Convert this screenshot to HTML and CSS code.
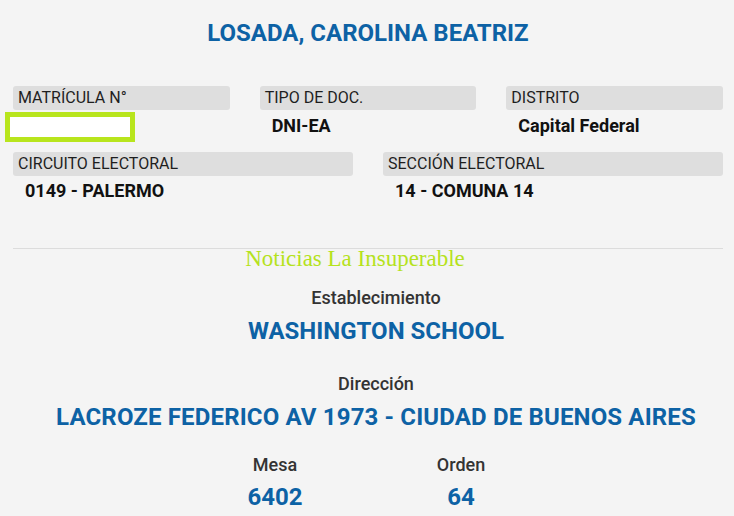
FILE: index.html
```html
<!DOCTYPE html>
<html lang="es">
<head>
<meta charset="utf-8">
<link rel="stylesheet" href="styles.css">
</head>
<body>
<div class="page">
  <h1 class="name">LOSADA, CAROLINA BEATRIZ</h1>

  <div class="grid three">
    <div class="field">
      <div class="label">MATRÍCULA N°</div>
      <div class="redact"></div>
    </div>
    <div class="field">
      <div class="label">TIPO DE DOC.</div>
      <div class="value v1">DNI-EA</div>
    </div>
    <div class="field">
      <div class="label">DISTRITO</div>
      <div class="value v1">Capital Federal</div>
    </div>
  </div>

  <div class="grid two">
    <div class="field">
      <div class="label">CIRCUITO ELECTORAL</div>
      <div class="value v2">0149 - PALERMO</div>
    </div>
    <div class="field">
      <div class="label">SECCIÓN ELECTORAL</div>
      <div class="value v2">14 - COMUNA 14</div>
    </div>
  </div>

  <hr class="sep">
  <div class="brand">Noticias La Insuperable</div>

  <div class="place">
    <div class="cap first">Establecimiento</div>
    <div class="big">WASHINGTON SCHOOL</div>
    <div class="cap second">Dirección</div>
    <div class="big wide">LACROZE FEDERICO AV 1973 - CIUDAD DE BUENOS AIRES</div>
  </div>

  <div class="pair">
    <div class="cell">
      <div class="cap">Mesa</div>
      <div class="big">6402</div>
    </div>
    <div class="cell">
      <div class="cap">Orden</div>
      <div class="big">64</div>
    </div>
  </div>
</div>
</body>
</html>
```

FILE: styles.css
```css
html, body {
  margin: 0;
  padding: 0;
  background: #f4f4f4;
}
body {
  font-family: Roboto, "Liberation Sans", sans-serif;
  color: #222;
}
.page {
  width: 710px;
  margin-left: 13px;
}
.name {
  margin: 19px 0 0;
  text-align: center;
  font-size: 24px;
  line-height: 28px;
  font-weight: 700;
  color: #0d62a5;
}
.grid {
  display: grid;
  column-gap: 30px;
}
.three {
  grid-template-columns: repeat(3, 1fr);
  margin-top: 39px;
}
.two {
  grid-template-columns: repeat(2, 1fr);
  margin-top: 10px;
}
.label {
  background: #dedede;
  border-radius: 3px;
  height: 24px;
  line-height: 24px;
  font-size: 16px;
  padding-left: 5px;
  color: #1e1e1e;
}
.redact {
  margin: 2px 0 0 -8px;
  width: 130px;
  height: 30px;
  box-sizing: border-box;
  border: 5px solid #b8e51d;
  background: #fff;
}
.value {
  padding-left: 12px;
  font-size: 18px;
  font-weight: 700;
  color: #111;
}
.v1 {
  margin-top: 1px;
  line-height: 29px;
}
.v2 {
  margin-top: 2px;
  line-height: 26px;
}
.sep {
  margin: 44px 0 0;
  border: 0;
  border-top: 1px solid #dcdcdc;
  height: 0;
}
.brand {
  font-family: "Liberation Serif", serif;
  font-size: 23px;
  line-height: 20px;
  color: #b5e21d;
  text-align: center;
  padding-right: 26px;
}
.place {
  padding-left: 16px;
  text-align: center;
}
.cap {
  font-size: 18px;
  line-height: 20px;
  font-weight: 500;
  color: #333;
  text-align: center;
}
.first { margin-top: 19px; }
.second { margin-top: 29px; }
.big {
  margin-top: 9px;
  font-size: 24px;
  line-height: 28px;
  font-weight: 700;
  color: #0d62a5;
  text-align: center;
}
.wide {
  letter-spacing: 0.15px;
}
.pair {
  display: flex;
  justify-content: center;
  margin-top: 24px;
}
.cell {
  width: 186px;
}
.cell .big {
  margin-top: 8px;
}
```
